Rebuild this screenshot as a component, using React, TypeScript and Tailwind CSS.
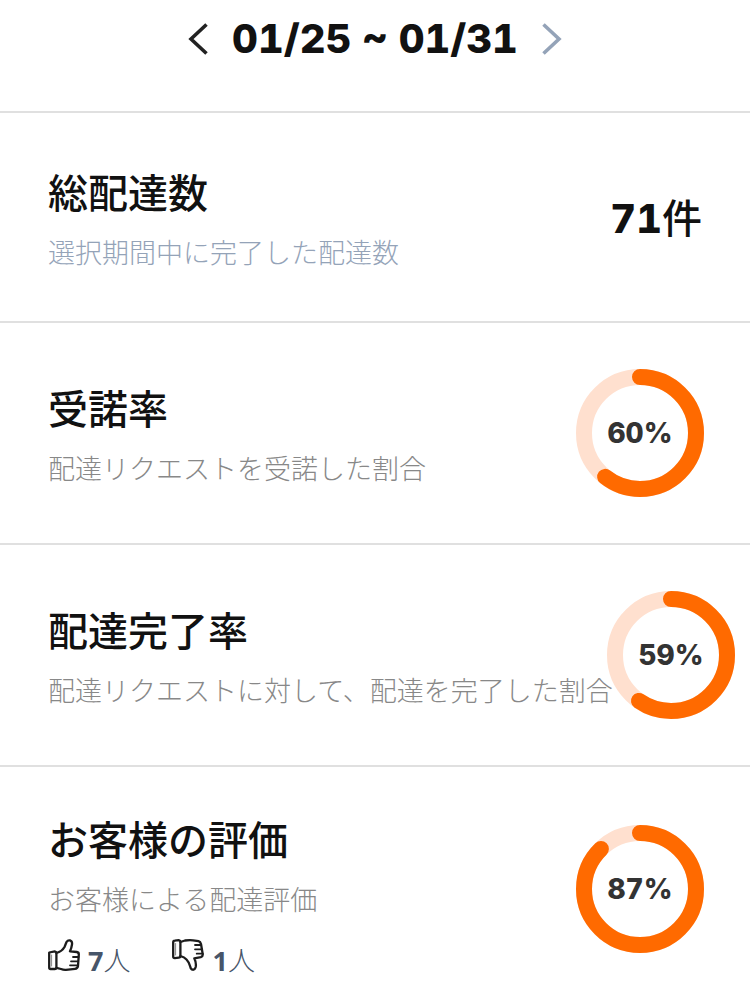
import React from "react";

function Ring({ value, label, className = "" }: { value: number; label: string; className?: string }) {
  return (
    <div role="img" aria-label={`${label} ${value}%`} className={`relative size-32 shrink-0 ${className}`}>
      <svg viewBox="0 0 128 128" className="size-full" aria-hidden="true">
        <g fill="none" strokeWidth="16" transform="rotate(-90 64 64)">
          <circle cx="64" cy="64" r="56" stroke="#ffe0cf" />
          <circle cx="64" cy="64" r="56" stroke="#ff6a00" strokeLinecap="round" pathLength="100" strokeDasharray={`${value + 0.7} 100`} />
        </g>
      </svg>
      <span className="absolute inset-0 flex items-center justify-center text-[28px] font-extrabold tabular-nums text-[#333333]">{value}%</span>
    </div>
  );
}

function Label({ title, note, tone }: { title: string; note: string; tone: string }) {
  return (
    <div className="min-w-0 pt-1">
      <h2 className="text-[40px] leading-[60px] font-medium whitespace-nowrap text-[#111111]">{title}</h2>
      <p className={`mt-2.5 text-[27px] leading-[40px] font-light whitespace-nowrap ${tone}`}>{note}</p>
    </div>
  );
}

function ThumbUp() {
  return (
    <svg viewBox="0 0 32 32" className="size-8" fill="none" stroke="#1c1c1c" strokeWidth="2.3" strokeLinejoin="round" strokeLinecap="round" aria-hidden="true">
      <path d="M1.2 13.5 6.8 12.3Q8.4 12.5 8.4 14V28.5Q8.2 30 6.8 30H2.5Q1.2 30 1.2 28.5Z" />
      <path d="M8.4 14Q14 12.5 16.5 8L18.5 3Q19.8.9 22 1.4Q24.5 2.3 24 5.5Q23.5 9 22 12.3L28.8 13Q31 13.4 30.8 15.7L30 27Q29.6 29.5 27 29.8L18 30.8Q15.5 31 13 30L8.4 28.8" />
      <path d="M25 18h5.5M23 22.3h7M22 26.3h7.5" strokeWidth="1.8" />
      <path d="M3.6 16v11" strokeWidth="1" stroke="#888888" />
    </svg>
  );
}

function ThumbDown() {
  return (
    <svg viewBox="0 0 32 32" className="size-8" fill="none" stroke="#1c1c1c" strokeWidth="2.3" strokeLinejoin="round" strokeLinecap="round" aria-hidden="true">
      <path d="M1.2 3.3Q1.2 1.7 2.7 1.6L6.8 1.2Q8.4 1.4 8.4 3V17Q8.4 18.6 6.8 18.6L2.7 19.2Q1.2 19.2 1.2 17.5Z" />
      <path d="M8.4 3 13 1.5Q17 1 21 1.3L26.5 2.2Q28.5 2.7 29 5L30.7 15Q31 17.5 28.8 18.2L22.3 19.3Q24.5 24 23.7 28Q22.8 31 20.6 30.7Q18.8 30.4 18.2 27.5Q17.2 23.3 14.5 20.5Q12.3 18.2 8.4 17" />
      <path d="M23 6h6M23 10.3h7M24.7 14.7h6" strokeWidth="1.8" />
      <path d="M3.6 4.5v11.5" strokeWidth="1" stroke="#888888" />
    </svg>
  );
}

function Count({ value, label, children }: { value: number; label: string; children: React.ReactNode }) {
  return (
    <span aria-label={label} className="flex items-baseline gap-2">
      {children}
      <span className="text-[27px] leading-8 font-light">
        <span className="font-['Open_Sans',sans-serif] font-bold">{value}</span>人
      </span>
    </span>
  );
}

export default function App() {
  return (
    <main lang="ja" className="bg-white font-['Inter','Noto_Sans_CJK_JP',sans-serif]">
      <header className="flex items-start justify-center pt-[15px] pb-12">
        <div className="flex items-center gap-6">
          <button type="button" aria-label="前の週">
            <svg viewBox="0 0 20 32" className="h-8 w-5" fill="none" stroke="#222222" strokeWidth="3.6" aria-hidden="true"><path d="M18.5 1.5 3 16l15.500 14.5" /></svg>
          </button>
          <h1 className="text-[40px] leading-[48px] font-extrabold tabular-nums whitespace-nowrap text-[#111111]">01/25 ~ 01/31</h1>
          <button type="button" aria-label="次の週">
            <svg viewBox="0 0 20 32" className="h-8 w-5" fill="none" stroke="#94a3b8" strokeWidth="3.6" aria-hidden="true"><path d="m1.5 1.5 15.500 14.5L1.500 30.5" /></svg>
          </button>
        </div>
      </header>
      <section className="flex min-h-[210px] items-center justify-between border-t-2 border-[#e0e0e0] px-12">
        <Label title="総配達数" note="選択期間中に完了した配達数" tone="text-[#94a3b8]" />
        <p className="pt-1 text-[40px] font-extrabold tabular-nums text-[#111111]">71<span className="font-medium">件</span></p>
      </section>
      <section className="flex min-h-[222px] items-center justify-between border-t-2 border-[#e0e0e0] pr-[46px] pl-12">
        <Label title="受諾率" note="配達リクエストを受諾した割合" tone="text-[#888888]" />
        <Ring value={60} label="受諾率" />
      </section>
      <section className="flex min-h-[222px] items-center justify-between border-t-2 border-[#e0e0e0] pr-[15px] pl-12">
        <Label title="配達完了率" note="配達リクエストに対して、配達を完了した割合" tone="text-[#888888]" />
        <Ring value={59} label="配達完了率" />
      </section>
      <section className="flex items-start justify-between border-t-2 border-[#e0e0e0] pt-10 pr-[46px] pb-2 pl-12">
        <div>
          <Label title="お客様の評価" note="お客様による配達評価" tone="text-[#888888]" />
          <div className="mt-[18px] flex gap-[42px] text-[#475569]">
            <Count value={7} label="高評価 7人"><ThumbUp /></Count>
            <Count value={1} label="低評価 1人"><ThumbDown /></Count>
          </div>
        </div>
        <Ring value={87} label="お客様の評価" className="mt-[18px]" />
      </section>
    </main>
  );
}
